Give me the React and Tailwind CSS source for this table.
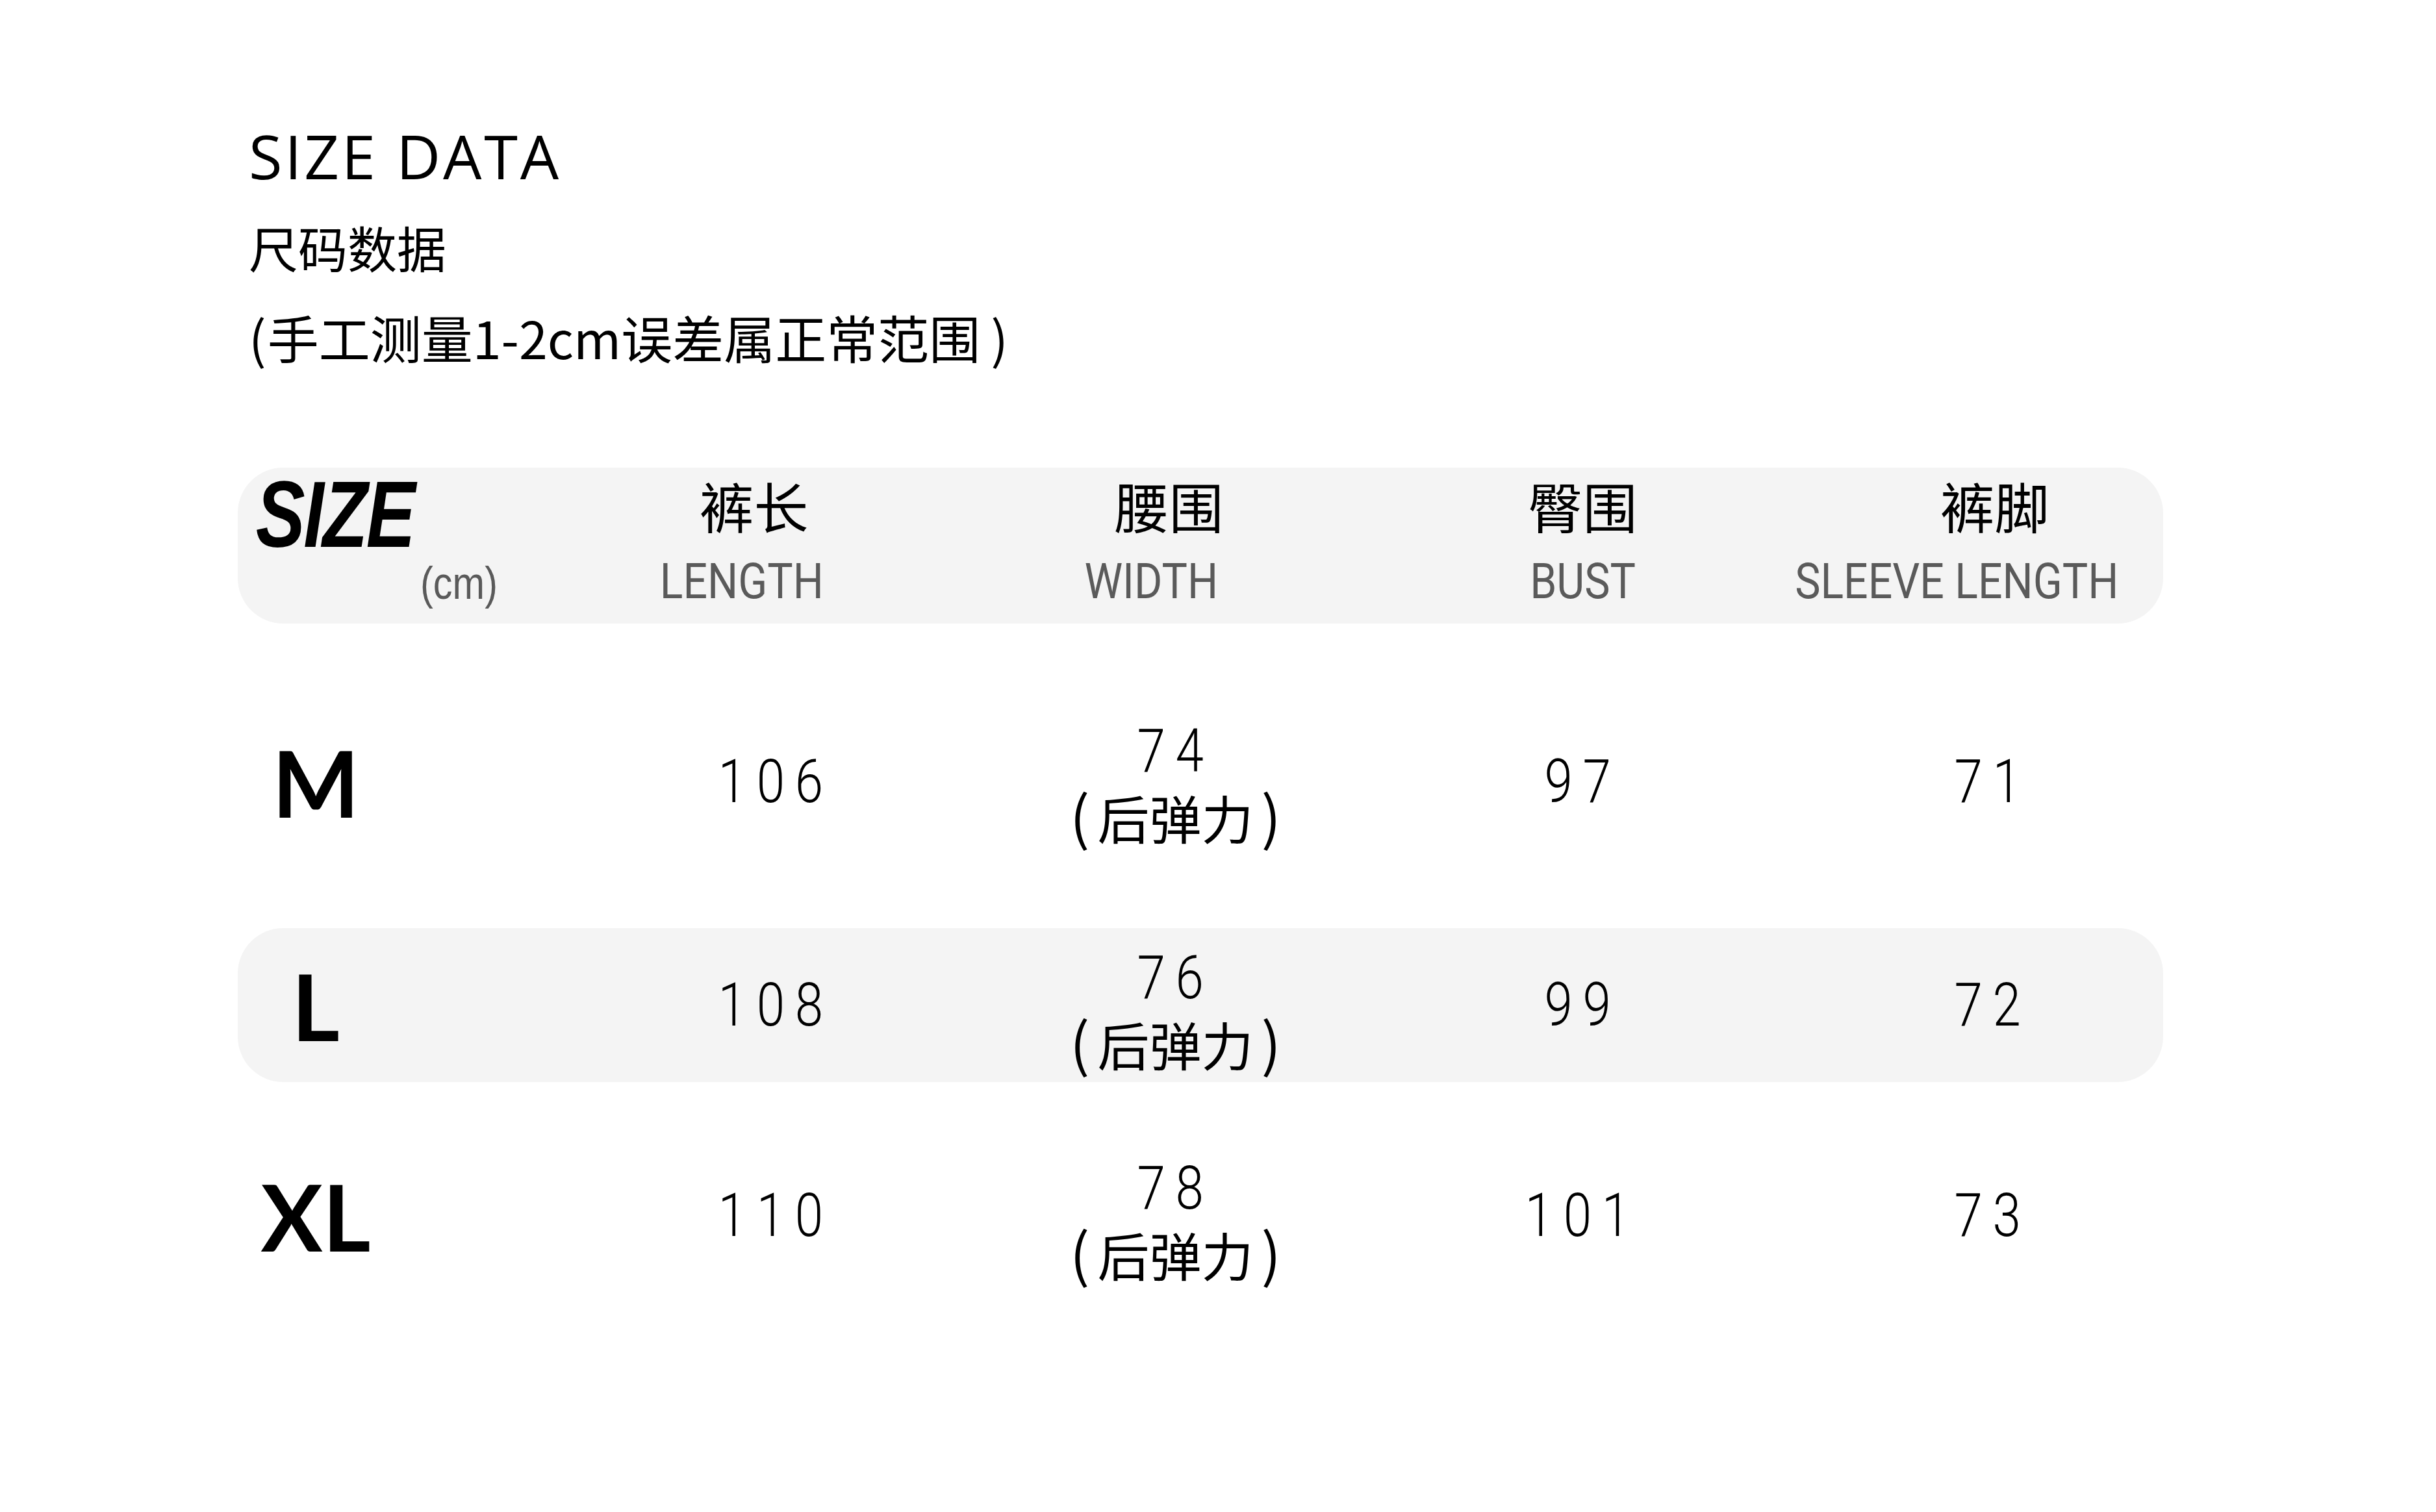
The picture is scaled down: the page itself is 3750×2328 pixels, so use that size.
const rows = [
  { size: 'M', length: '106', waist: '74', hip: '97', hem: '71', band: false, gap: 'mt-[125px]', lift: 'mt-[4px]' },
  { size: 'L', length: '108', waist: '76', hip: '99', hem: '72', band: true, gap: 'mt-[107px]', lift: 'mt-[14px]' },
  { size: 'XL', length: '110', waist: '78', hip: '101', hem: '73', band: false, gap: 'mt-[87px]', lift: 'mt-[14px]' },
];

const cjk = "font-['Noto_Sans_CJK_SC',sans-serif]";
const cols = 'grid grid-cols-[488px_633px_633px_633px_minmax(0,1fr)] items-center';

function HeadCell({ zh, en, zhShift = '', enShift = '' }) {
  return (
    <div className="flex flex-col items-center">
      <div className={`${cjk} mt-[-10px] text-[84px] leading-[84px] text-black ${zhShift}`}>{zh}</div>
      <div
        className={`mt-[35px] inline-block scale-x-[0.87] font-[Roboto] text-[76px] leading-[80px] text-[#5a5a5a] whitespace-nowrap ${enShift}`}
      >
        {en}
      </div>
    </div>
  );
}

function Num({ children, className = '' }) {
  return (
    <div
      className={`inline-block scale-x-[0.85] font-[Roboto] font-light text-[92px] leading-[100px] tracking-[0.2em] text-black ${className}`}
    >
      {children}
    </div>
  );
}

export default function App() {
  return (
    <div className="w-[3750px] h-[2328px] bg-white overflow-hidden">
      {/* Title block */}
      <div className="pl-[383px] pt-[193px]">
        <h1 className="font-['Open_Sans',sans-serif] text-[94px] leading-none tracking-[0.04em] text-black">
          SIZE DATA
        </h1>
        <p className={`${cjk} mt-[55px] text-[76px] leading-[76px] text-black`}>尺码数据</p>
        <p className={`${cjk} mt-[62px] text-[79px] leading-[78px] text-black whitespace-nowrap`}>
          <span className="mr-[2px]">(</span>手工测量1-2cm误差属正常范围<span className="ml-[16px]">)</span>
        </p>
      </div>

      {/* Table */}
      <div className="ml-[366px] mt-[162px] w-[2964px]">
        <div className={`${cols} h-[240px] rounded-[70px] bg-[#f4f4f4]`}>
          <div className="flex flex-col self-start">
            <div className="mt-[8px] pl-[35px] origin-left scale-x-[0.79] font-['Liberation_Sans',sans-serif] font-black italic text-[144px] leading-[130px] tracking-[-0.02em] text-black">
              SIZE
            </div>
            <div className="mt-[2px] ml-[281px] inline-block origin-left scale-x-[0.85] font-['Liberation_Sans',sans-serif] text-[70px] leading-[76px] text-[#5a5a5a]">
              (cm)
            </div>
          </div>
          <HeadCell zh="裤长" en="LENGTH" zhShift="-translate-x-[10px]" enShift="-translate-x-[29px]" />
          <HeadCell zh="腰围" en="WIDTH" zhShift="-translate-x-[4px]" enShift="-translate-x-[31px]" />
          <HeadCell zh="臀围" en="BUST" />
          <HeadCell zh="裤脚" en="SLEEVE LENGTH" zhShift="translate-x-[29px]" enShift="-translate-x-[29px]" />
        </div>

        <div className="flex flex-col">
          {rows.map((r) => (
            <div
              key={r.size}
              className={`${cols} ${r.gap} h-[237px] rounded-[70px] ${r.band ? 'bg-[#f4f4f4]' : ''}`}
            >
              <div className="w-[240px] text-center font-[Lato] font-bold text-[142px] leading-none text-black">
                {r.size}
              </div>
              <div className="text-center">
                <Num className="translate-x-[24px]">{r.length}</Num>
              </div>
              <div className={`flex flex-col items-center ${r.lift} translate-x-[6px]`}>
                <Num>{r.waist}</Num>
                <div className={`${cjk} -mt-[2px] text-[80px] leading-[96px] text-black whitespace-nowrap`}>
                  <span className="mr-[12px] text-[90px]">(</span>后弹力<span className="ml-[12px] text-[90px]">)</span>
                </div>
              </div>
              <div className="text-center">
                <Num>{r.hip}</Num>
              </div>
              <div className="text-center">
                <Num className="translate-x-[26px]">{r.hem}</Num>
              </div>
            </div>
          ))}
        </div>
      </div>
    </div>
  );
}
